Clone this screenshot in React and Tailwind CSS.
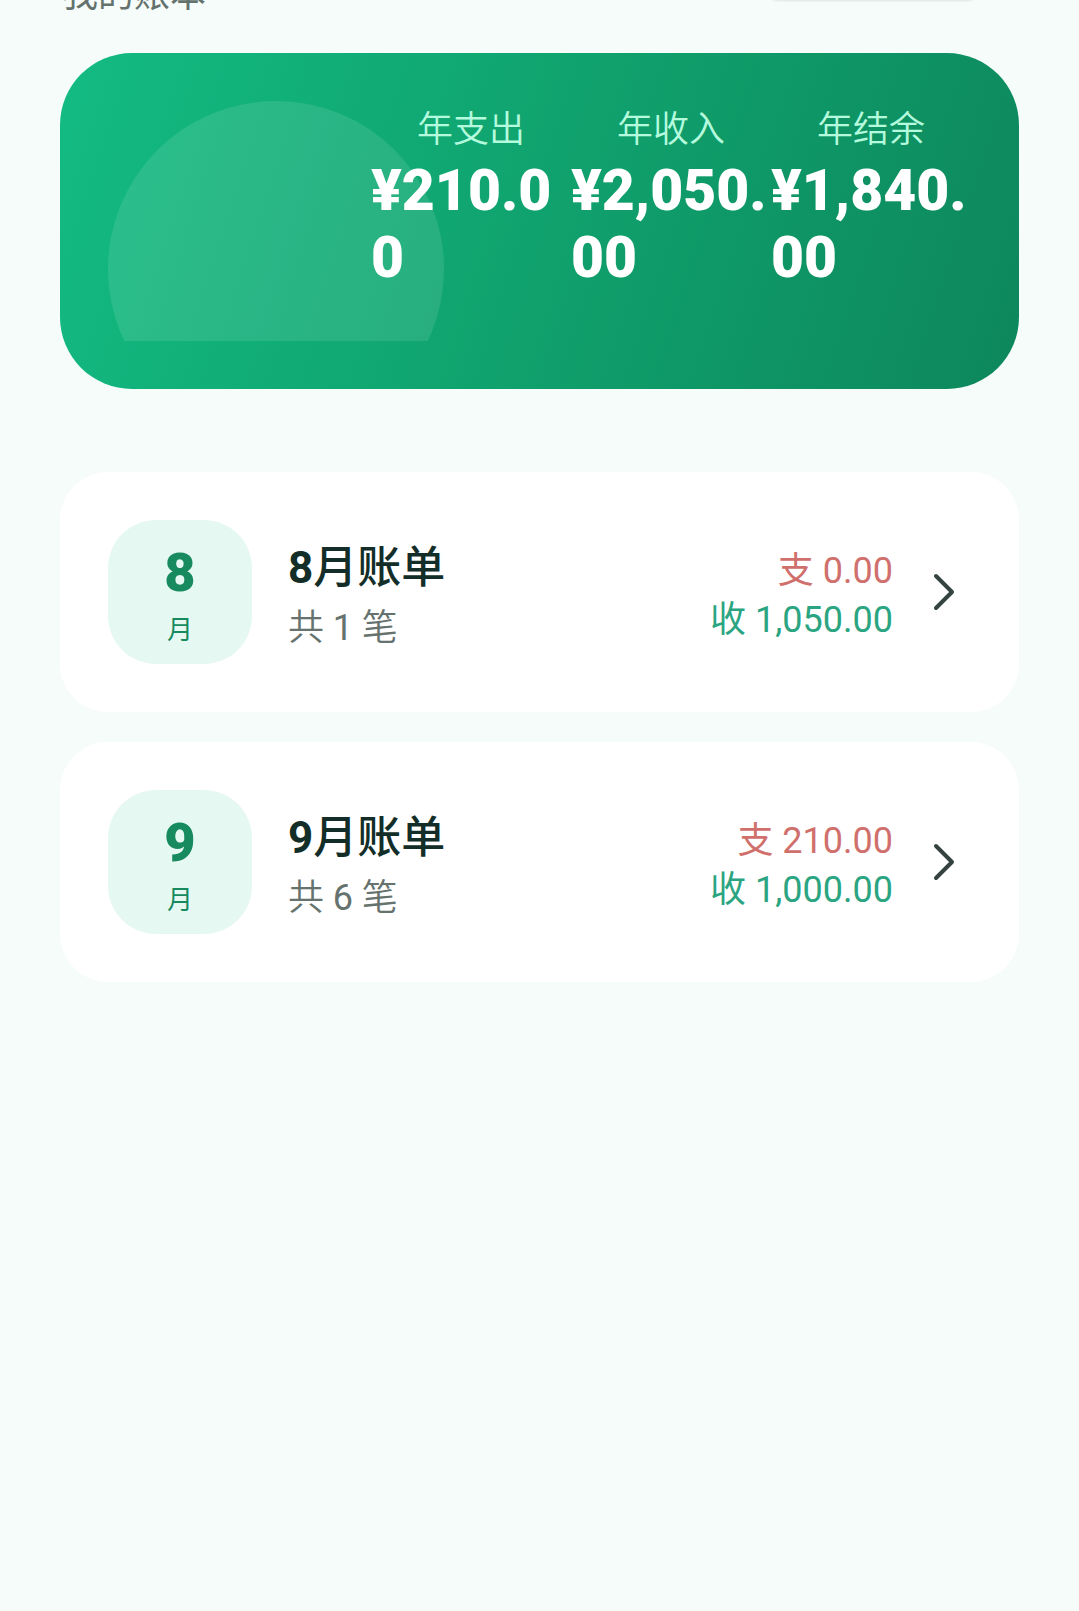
const totals = [
  { label: "年支出", amount: "¥210.00" },
  { label: "年收入", amount: "¥2,050.00" },
  { label: "年结余", amount: "¥1,840.00" },
];

const bills = [
  { month: 8, count: 1, expense: "0.00", income: "1,050.00" },
  { month: 9, count: 6, expense: "210.00", income: "1,000.00" },
];

function Header() {
  return (
    <header className="-mt-7 flex h-[81px] items-start justify-between">
      <h1 className="pl-0.5 text-4xl leading-[46px] font-normal text-[#64726d]">我的账本</h1>
      <div className="mr-9 h-7 w-[220px] rounded-b-2xl bg-white shadow-[0_0_3px_rgba(0,0,0,0.2)]" />
    </header>
  );
}

function YearSummary() {
  return (
    <section className="rounded-[72px] bg-linear-[108deg] from-[#13bb82] via-[#10a26e] to-[#0d875c] p-12">
      <div className="relative h-60 overflow-hidden">
        <div className="absolute top-0 left-0 size-84 rounded-full bg-white/10" />
        <dl className="relative flex justify-end">
          {totals.map((t) => (
            <div key={t.label} className="w-[200px]">
              <dt className="pt-1 text-center text-4xl leading-[50px] font-[350] text-[#b4fadd]">{t.label}</dt>
              <dd className="pt-0.5 text-[57px] leading-[67px] font-black break-all text-white">{t.amount}</dd>
            </div>
          ))}
        </dl>
      </div>
    </section>
  );
}

function Chevron() {
  return (
    <svg viewBox="0 0 24 40" className="h-10 w-6" fill="none" stroke="#34433f" strokeWidth="4" strokeLinecap="round" strokeLinejoin="round" aria-hidden="true">
      <path d="M3 4l16 16L3 36" />
    </svg>
  );
}

function BillRow({ month, count, expense, income }) {
  return (
    <button type="button" className="flex h-60 w-full items-center rounded-[48px] bg-white pr-[62px] pl-12 text-left">
      <span className="flex size-36 flex-col items-center justify-center rounded-[48px] bg-[#e6f8f2] pt-3 text-[#178a60]">
        <span className="text-[54px] leading-[64px] font-black">{month}</span>
        <span className="text-[26px] leading-[50px]">月</span>
      </span>
      <span className="ml-9 flex flex-col pt-2">
        <span className="text-[44px] leading-[64px] font-medium text-[#132e28]">
          <span className="font-bold">{month}</span>月账单
        </span>
        <span className="text-4xl leading-[56px] font-[350] text-[#65726e]">
          共 <span className="font-normal">{count}</span> 笔
        </span>
      </span>
      <span className="ml-auto flex flex-col pt-2 text-right text-4xl leading-[49px]">
        <span className="text-[#d0706d]">支 {expense}</span>
        <span className="text-[#2ba581]">收 {income}</span>
      </span>
      <span className="ml-10">
        <Chevron />
      </span>
    </button>
  );
}

export default function App() {
  return (
    <main
      lang="zh-CN"
      className="flow-root min-h-screen bg-[#f5fcfa] px-15 font-[Roboto,'Noto_Sans_CJK_SC',sans-serif]"
    >
      <Header />
      <YearSummary />
      <section className="mt-[83px] flex flex-col gap-[30px]">
        {bills.map((b) => (
          <BillRow key={b.month} {...b} />
        ))}
      </section>
    </main>
  );
}
